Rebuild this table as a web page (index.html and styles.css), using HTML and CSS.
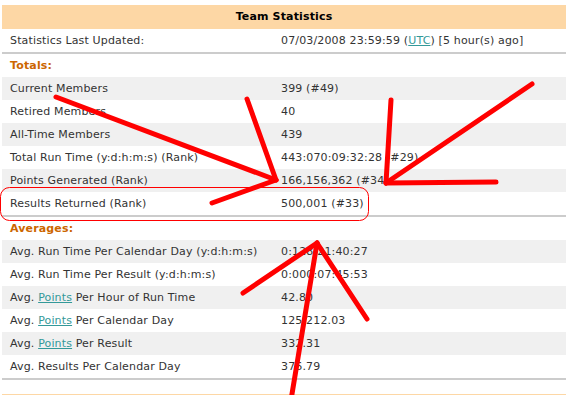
FILE: index.html
```html
<!DOCTYPE html>
<html>
<head>
<meta charset="utf-8">
<link rel="stylesheet" href="styles.css">
</head>
<body>
<div class="page">
  <div class="stats">
    <div class="title">Team Statistics</div>
    <div class="row"><span>Statistics Last Updated:</span><span>07/03/2008 23:59:59 (<a href="#">UTC</a>) [5 hour(s) ago]</span></div>
    <div class="sep"></div>
    <div class="section">Totals:</div>
    <div class="row alt"><span>Current Members</span><span>399 (#49)</span></div>
    <div class="row"><span>Retired Members</span><span>40</span></div>
    <div class="row alt"><span>All-Time Members</span><span>439</span></div>
    <div class="row"><span>Total Run Time (y:d:h:m:s) (Rank)</span><span>443:070:09:32:28 (#29)</span></div>
    <div class="row alt"><span>Points Generated (Rank)</span><span>166,156,362 (#34)</span></div>
    <div class="row"><span>Results Returned (Rank)</span><span>500,001 (#33)</span></div>
    <div class="sep"></div>
    <div class="section">Averages:</div>
    <div class="row alt"><span>Avg. Run Time Per Calendar Day (y:d:h:m:s)</span><span>0:128:21:40:27</span></div>
    <div class="row"><span>Avg. Run Time Per Result (y:d:h:m:s)</span><span>0:000:07:45:53</span></div>
    <div class="row alt"><span>Avg. <a href="#">Points</a> Per Hour of Run Time</span><span>42.80</span></div>
    <div class="row"><span>Avg. <a href="#">Points</a> Per Calendar Day</span><span>125,212.03</span></div>
    <div class="row alt"><span>Avg. <a href="#">Points</a> Per Result</span><span>332.31</span></div>
    <div class="row"><span>Avg. Results Per Calendar Day</span><span>376.79</span></div>
    <div class="sep"></div>
  </div>
  <div class="next"></div>
  <svg class="marks" width="582" height="395" viewBox="0 0 582 395">
    <rect x="0.5" y="187.5" width="368" height="33" rx="9" ry="9" fill="none" stroke="#ff0000" stroke-width="1"/>
    <g fill="none" stroke="#ff0000" stroke-width="5" stroke-linecap="round" stroke-linejoin="round">
      <line x1="56" y1="97" x2="276" y2="180"/>
      <line x1="247" y1="99" x2="276" y2="180"/>
      <line x1="212" y1="203" x2="276" y2="180"/>
      <line x1="391" y1="100" x2="386" y2="183"/>
      <line x1="532" y1="84" x2="386" y2="183"/>
      <line x1="496" y1="182" x2="386" y2="183"/>
      <line x1="243" y1="293" x2="317" y2="243"/>
      <line x1="367" y1="319" x2="317" y2="243"/>
      <line x1="317" y1="243" x2="291" y2="400"/>
    </g>
  </svg>
</div>
</body>
</html>
```
FILE: styles.css
```css
html, body {
  margin: 0;
  padding: 0;
  background: #ffffff;
}
.page {
  position: relative;
  width: 582px;
  height: 395px;
  overflow: hidden;
  padding: 5px 0 0 2px;
  box-sizing: border-box;
  font-family: "DejaVu Sans", Verdana, sans-serif;
  font-size: 11px;
  letter-spacing: 0.15px;
  color: #333333;
}
.stats {
  width: 564px;
}
.title {
  height: 24px;
  line-height: 24px;
  background: #fdd7a5;
  color: #000000;
  font-weight: bold;
  text-align: center;
}
.row {
  display: grid;
  grid-template-columns: 271px 1fr;
  height: 23px;
  align-items: center;
  white-space: nowrap;
}
.row span {
  padding-left: 8px;
}
.row.alt {
  background: #f0f0f0;
}
.sep {
  height: 2px;
  background: #cccccc;
}
.section {
  height: 23px;
  line-height: 23px;
  padding-left: 8px;
  color: #cc6600;
  font-weight: bold;
}
a {
  color: #339999;
  text-decoration: underline;
}
.next {
  width: 564px;
  height: 4px;
  margin-top: 14px;
  background: #fdd7a5;
}
.marks {
  position: absolute;
  left: 0;
  top: 0;
  pointer-events: none;
}
```
